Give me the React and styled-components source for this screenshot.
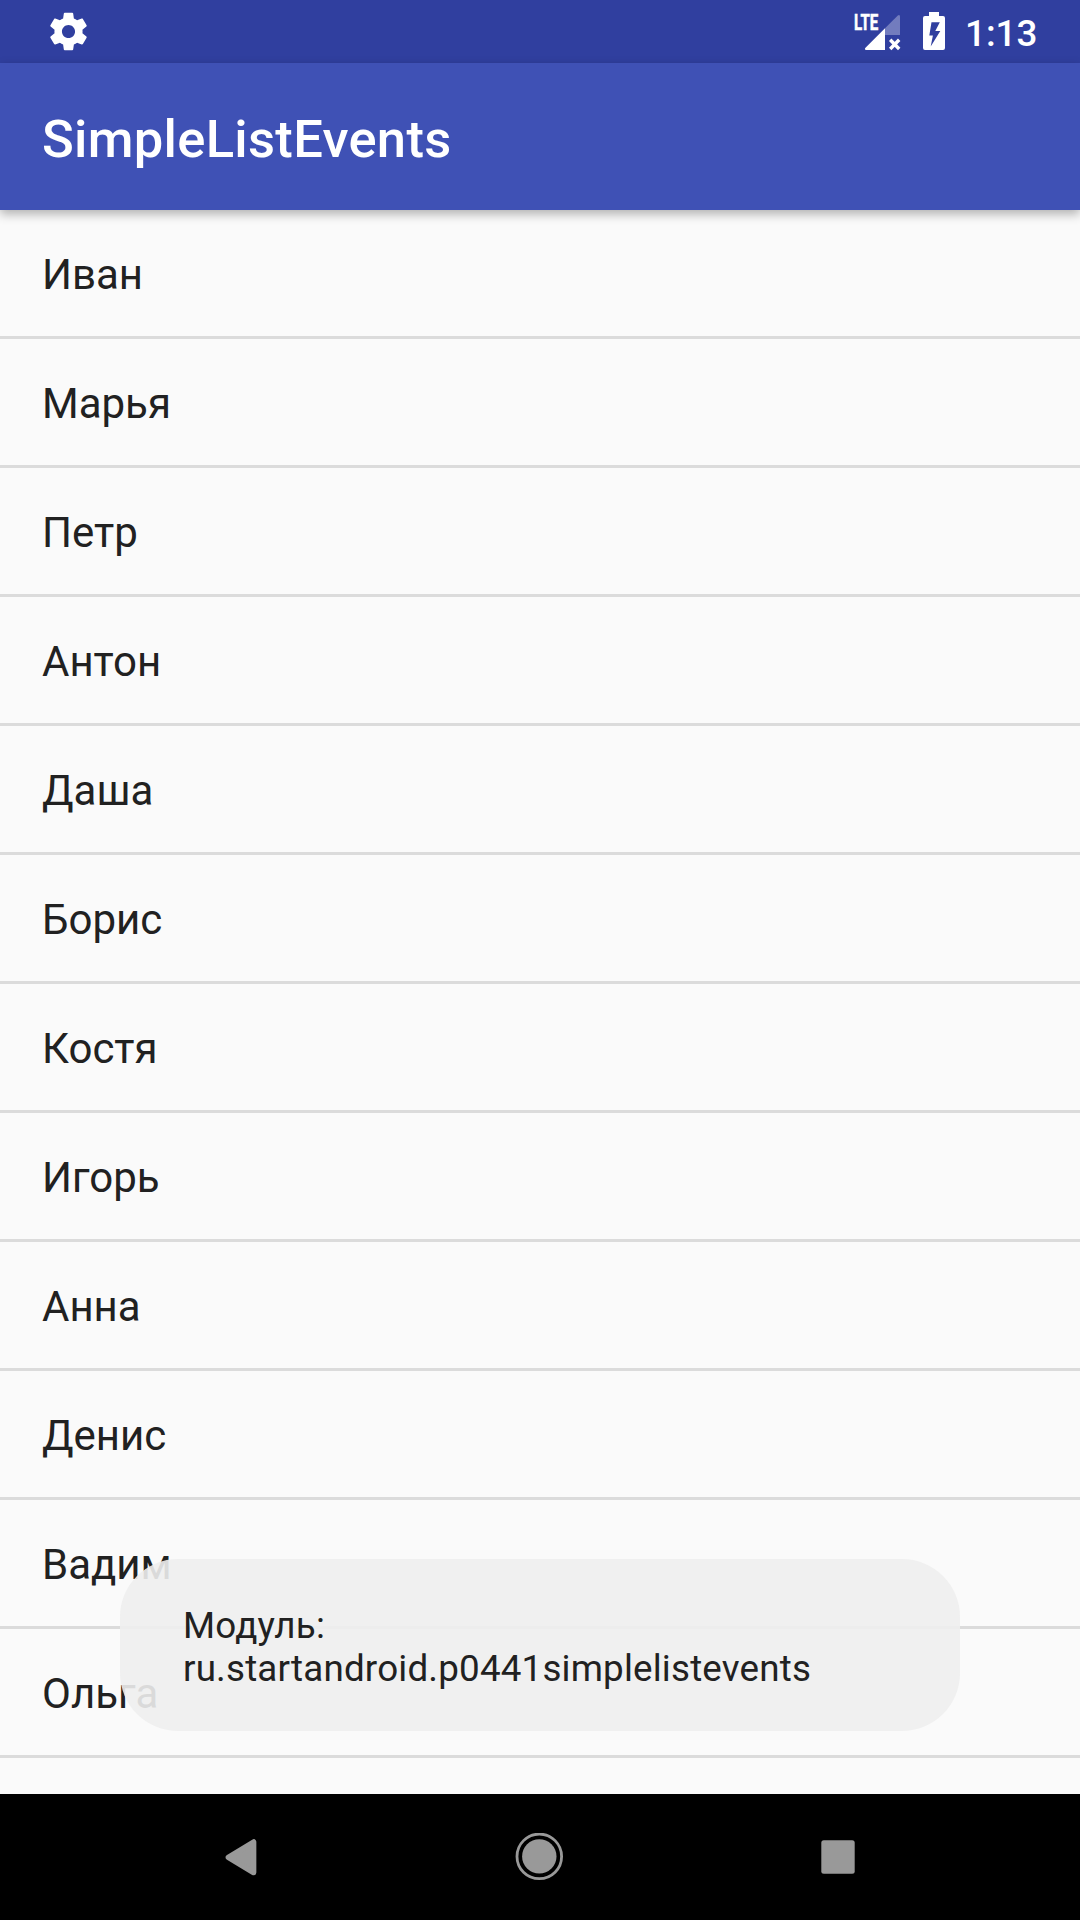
import React from "react";
import styled, { createGlobalStyle } from "styled-components";

const GlobalStyle = createGlobalStyle`
  html, body { margin: 0; padding: 0; background: #fafafa; }
  *, *::before, *::after { box-sizing: border-box; }
`;

const Screen = styled.div`
  position: relative;
  display: flex;
  flex-direction: column;
  width: 1080px;
  height: 1920px;
  overflow: hidden;
  background: #fafafa;
  color: #212121;
  font-family: Roboto, "Noto Sans", sans-serif;
`;

const StatusBar = styled.header`
  display: flex;
  justify-content: space-between;
  flex: none;
  height: 63px;
  padding: 0 42px 0 46px;
  background: #303f9f;
  color: #fff;
`;

const StatusGroup = styled.div`
  display: flex;
  align-items: flex-start;
`;

const Icon = styled.svg`
  display: block;
  flex: none;
  width: ${(p) => p.$w}px;
  height: ${(p) => p.$h}px;
`;

const GearIcon = styled(Icon)`
  margin-top: 9px;
`;

const Signal = styled.div`
  position: relative;
  width: 48px;
  height: 63px;
  margin-right: 21px;
`;

const NetworkType = styled.span`
  position: absolute;
  left: 1px;
  top: 9px;
  font-size: 22.5px;
  line-height: 26px;
  font-weight: 700;
  -webkit-text-stroke: 0.6px #fff;
  transform: scaleX(0.67);
  transform-origin: 0 0;
`;

const Clock = styled.time`
  margin-left: 19px;
  font-size: 36.75px;
  font-weight: 500;
  line-height: 43px;
  padding-top: 12px;
  width: 73px;
  white-space: nowrap;
`;

const AppBar = styled.div`
  position: relative;
  z-index: 1;
  display: flex;
  align-items: center;
  flex: none;
  height: 147px;
  padding: 4px 42px 0;
  background: #3f51b5;
  box-shadow: 0 4px 10px rgba(0, 0, 0, 0.3);
`;

const Title = styled.h1`
  margin: 0;
  color: #fff;
  font-size: 52.5px;
  font-weight: 500;
  line-height: 62px;
  letter-spacing: 0.3px;
`;

const List = styled.ul`
  flex: 1;
  min-height: 0;
  margin: 0;
  padding: 0;
  list-style: none;
  overflow: hidden;
`;

const Row = styled.li`
  display: flex;
  align-items: center;
  height: 129px;
  padding: 4px 42px 0;
  border-bottom: 3px solid #dbdbdb;
  font-size: 42px;
  line-height: 50px;
`;

const Toast = styled.div`
  position: absolute;
  left: 120px;
  top: 1559px;
  width: 840px;
  height: 172px;
  padding: 45px 63px 0;
  border-radius: 58px;
  background: rgba(238, 238, 238, 0.9);
  font-size: 36.75px;
  line-height: 43px;
  letter-spacing: 0.19px;
  white-space: pre-line;
`;

const NavBar = styled.nav`
  display: flex;
  align-items: center;
  justify-content: center;
  gap: 238px;
  flex: none;
  height: 126px;
  background: #000;
`;

const NavButton = styled.button`
  display: flex;
  padding: 0;
  border: 0;
  background: none;
`;

const names = [
  "Иван", "Марья", "Петр", "Антон", "Даша", "Борис",
  "Костя", "Игорь", "Анна", "Денис", "Вадим", "Ольга",
];

export default function App() {
  return (
    <>
      <GlobalStyle />
      <Screen>
        <StatusBar>
          <GearIcon $w={45} $h={45} viewBox="0 0 24 24" fill="#fff">
            <path d="M19.43 12.98c.04-.32.07-.64.07-.98s-.03-.66-.07-.98l2.11-1.65c.19-.15.24-.42.12-.64l-2-3.46c-.12-.22-.39-.3-.61-.22l-2.49 1c-.52-.4-1.08-.73-1.69-.98l-.38-2.65C14.46 2.18 14.25 2 14 2h-4c-.25 0-.46.18-.49.42l-.38 2.65c-.61.25-1.17.59-1.69.98l-2.49-1c-.23-.09-.49 0-.61.22l-2 3.46c-.13.22-.07.49.12.64l2.11 1.65c-.04.32-.07.65-.07.98s.03.66.07.98l-2.11 1.65c-.19.15-.24.42-.12.64l2 3.46c.12.22.39.3.61.22l2.49-1c.52.4 1.08.73 1.69.98l.38 2.65c.03.24.24.42.49.42h4c.25 0 .46-.18.49-.42l.38-2.65c.61-.25 1.17-.59 1.69-.98l2.49 1c.23.09.49 0 .61-.22l2-3.46c.12-.22.07-.49-.12-.64l-2.11-1.65zM12 15.5c-1.93 0-3.5-1.57-3.5-3.5s1.57-3.5 3.5-3.5 3.5 1.57 3.5 3.5-1.57 3.5-3.5 3.5z" />
          </GearIcon>
          <StatusGroup>
            <Signal>
              <Icon $w={48} $h={63} viewBox="0 0 48 63">
                <path d="M32 28.2 44.8 15.4Q47 14 47 16.6V35H32Z" fill="#fff" fillOpacity=".32" />
                <path d="M32 28.2V50H13.2Q11 49.6 12.5 47.7Z" fill="#fff" />
                <path d="m37.2 39.8 9 9.2m0-9.2-9 9.2" stroke="#fff" strokeWidth="3.4" />
              </Icon>
              <NetworkType>LTE</NetworkType>
            </Signal>
            <Icon $w={24} $h={63} viewBox="0 0 24 63">
              <path
                fill="#fff"
                fillRule="evenodd"
                d="M7 12h10v4h4q2 0 2 2v30q0 2-2 2H3q-2 0-2-2V18q0-2 2-2h4ZM9.5 22.2 7.3 35.6h3.6L8.7 46.5 18.3 31h-5l4.5-8.8Z"
              />
            </Icon>
            <Clock>1:13</Clock>
          </StatusGroup>
        </StatusBar>
        <AppBar>
          <Title>SimpleListEvents</Title>
        </AppBar>
        <List>
          {names.map((name) => (
            <Row key={name}>{name}</Row>
          ))}
        </List>
        <NavBar>
          <NavButton aria-label="Back">
            <Icon $w={60} $h={48} viewBox="212 1833 60 48">
              <path d="M253.6 1842v30.6L228.4 1857.3Z" fill="#999" stroke="#999" strokeWidth="5.5" strokeLinejoin="round" />
            </Icon>
          </NavButton>
          <NavButton aria-label="Home">
            <Icon $w={60} $h={48} viewBox="510 1833 60 48">
              <circle cx="539.3" cy="1856.4" r="22.3" fill="none" stroke="#999" strokeWidth="2.8" />
              <circle cx="539.3" cy="1856.4" r="17.2" fill="#999" />
            </Icon>
          </NavButton>
          <NavButton aria-label="Overview">
            <Icon $w={60} $h={48} viewBox="808 1833 60 48">
              <rect x="821.3" y="1840.3" width="33.4" height="33.4" rx="2.5" fill="#999" />
            </Icon>
          </NavButton>
        </NavBar>
        <Toast role="status">{"Модуль:\nru.startandroid.p0441simplelistevents"}</Toast>
      </Screen>
    </>
  );
}
